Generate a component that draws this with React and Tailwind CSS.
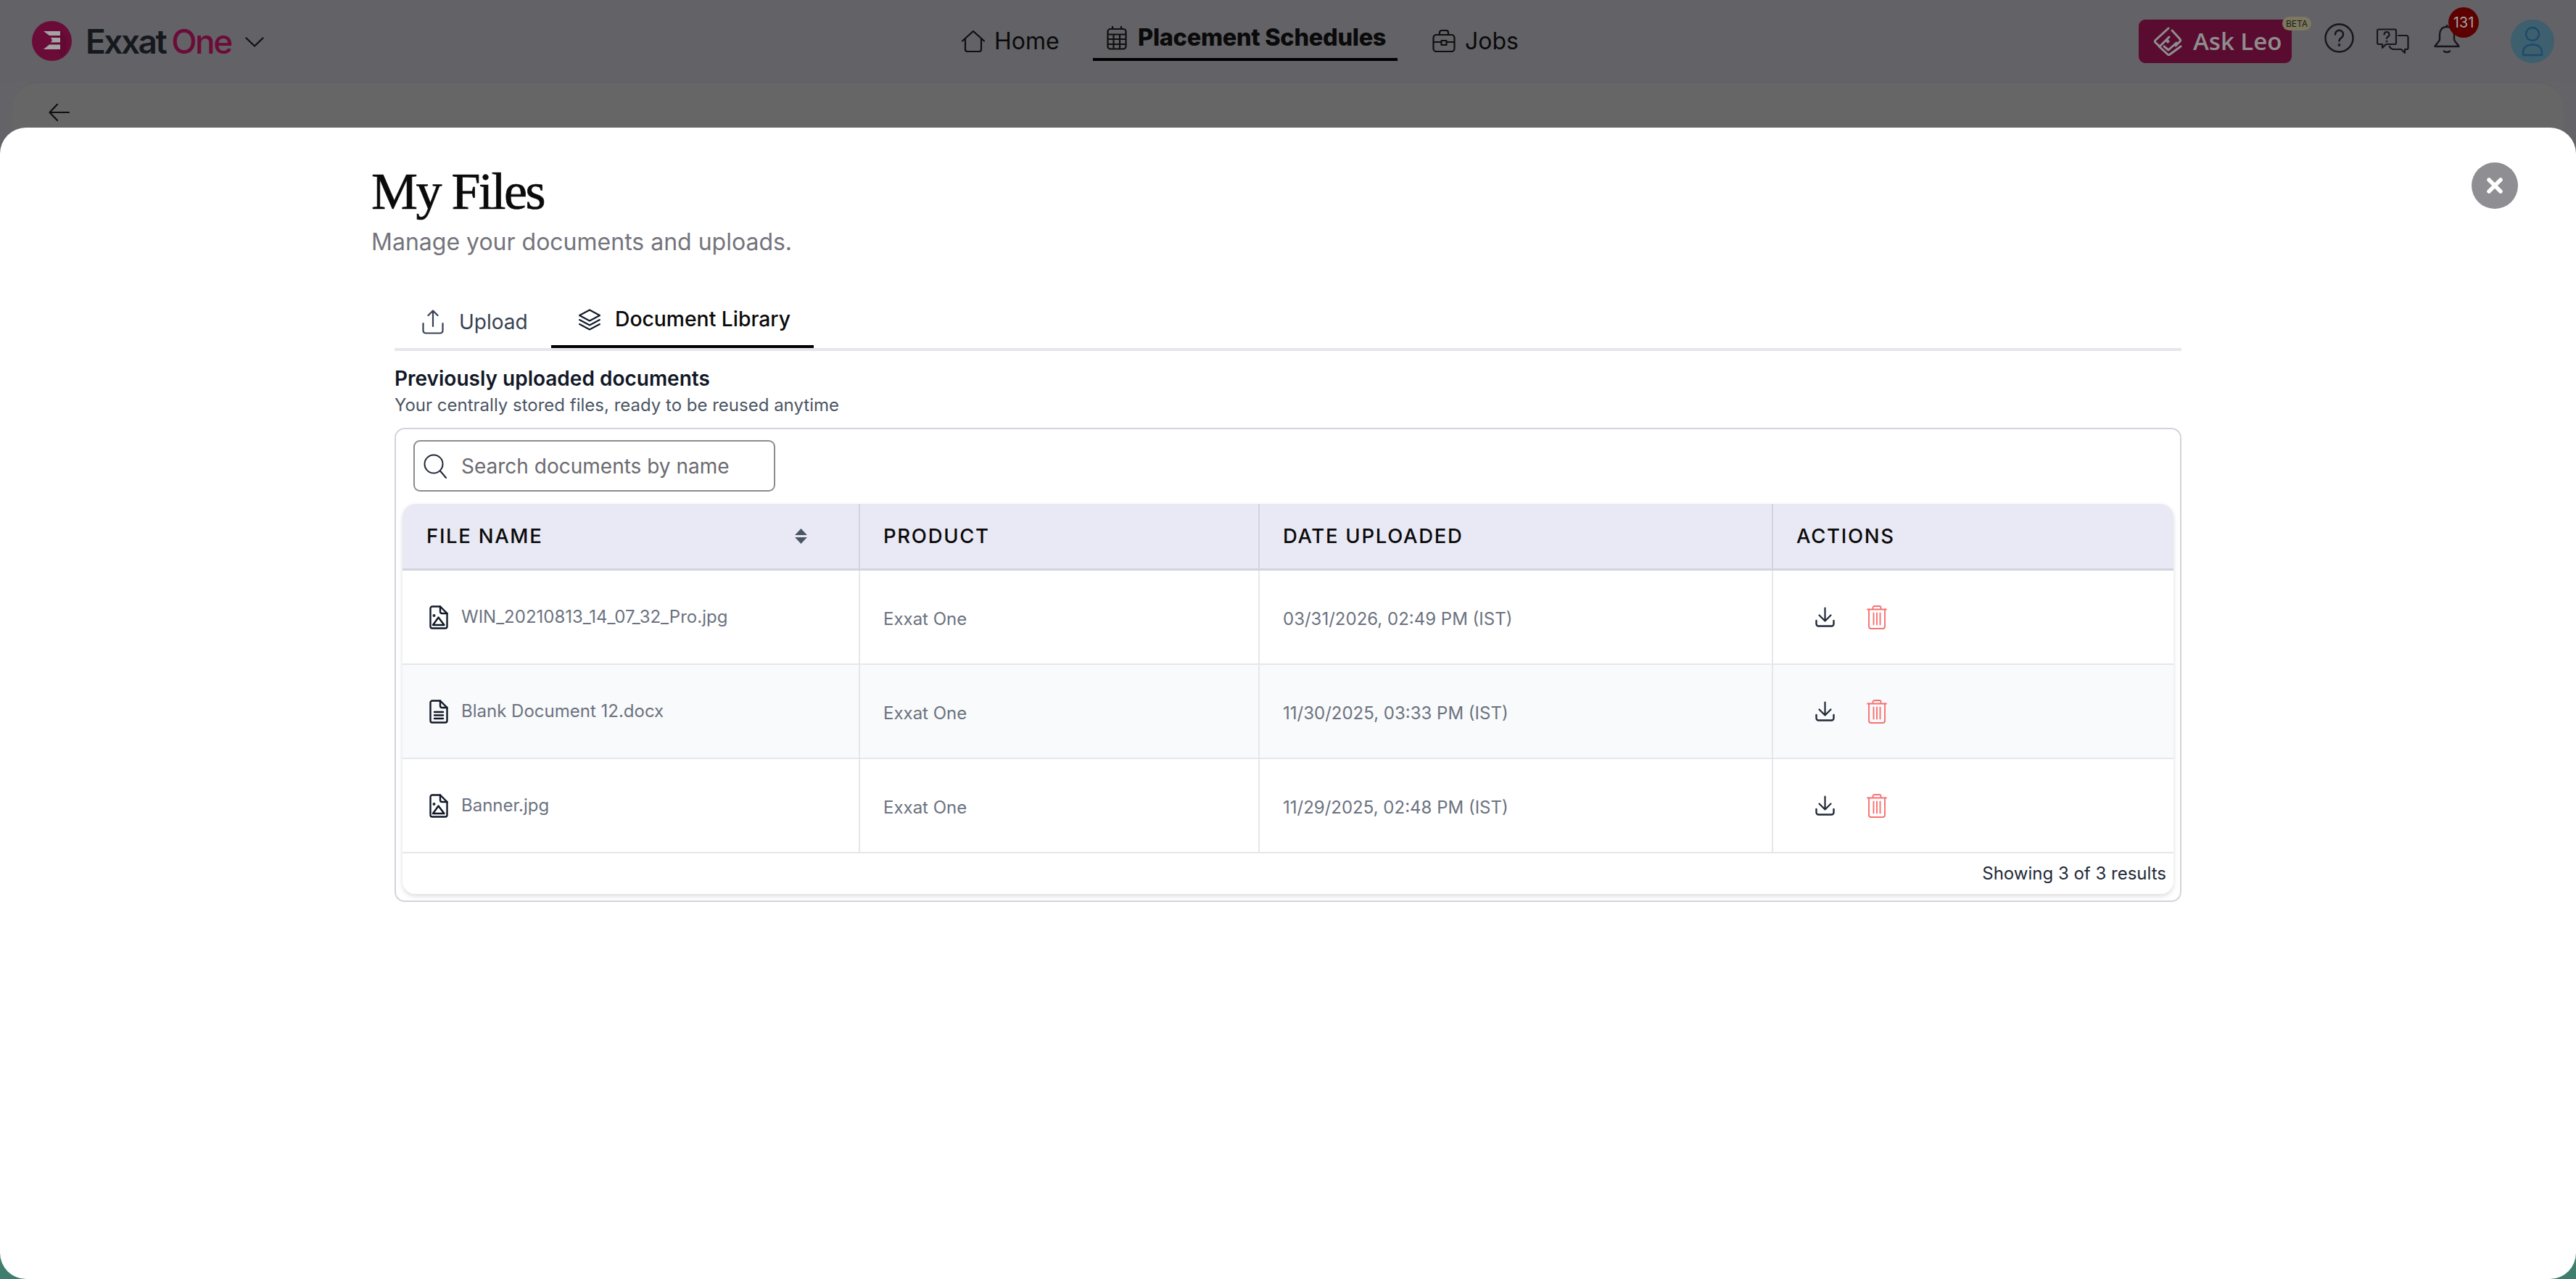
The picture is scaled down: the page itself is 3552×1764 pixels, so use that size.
import React from "react";

const rows = [
  { name: "WIN_20210813_14_07_32_Pro.jpg", date: "03/31/2026, 02:49 PM (IST)", kind: "image" },
  { name: "Blank Document 12.docx", date: "11/30/2025, 03:33 PM (IST)", kind: "doc" },
  { name: "Banner.jpg", date: "11/29/2025, 02:48 PM (IST)", kind: "image" },
];

const FileIcon = ({ kind }) => (
  <svg width="26" height="33" viewBox="0 0 26 33" fill="none" stroke="#111827" strokeWidth="2.4" strokeLinejoin="round" strokeLinecap="round">
    <path d="M4 1.5H15L24.5 11V29a2.5 2.5 0 0 1-2.5 2.5H4A2.5 2.5 0 0 1 1.5 29V4A2.5 2.5 0 0 1 4 1.5Z" />
    <path d="M15 1.5V8.5a2.5 2.5 0 0 0 2.5 2.5H24.5" />
    {kind === "image" ? (
      <>
        <path d="M5 27L12.5 16.5L20.5 27Z" />
        <circle cx="6.5" cy="14" r="0.8" />
      </>
    ) : (
      <path d="M7 17H19M7 21.5H19M7 26H19" />
    )}
  </svg>
);

const DownloadIcon = () => (
  <svg width="27" height="28" viewBox="0 0 27 28" fill="none" stroke="#1f2937" strokeWidth="2.2" strokeLinecap="round" strokeLinejoin="round">
    <path d="M13.5 1.5V19M5.5 11.5L13.5 19.5L21.5 11.5" />
    <path d="M1.5 19V23.5a3 3 0 0 0 3 3H22.5a3 3 0 0 0 3-3V19" strokeWidth="2.4" />
  </svg>
);

const TrashIcon = () => (
  <svg width="28" height="33" viewBox="0 0 28 33" fill="none" stroke="#f87171" strokeWidth="1.9" strokeLinecap="round" strokeLinejoin="round">
    <path d="M1 5.5H27M8.5 5.5V3a2 2 0 0 1 2-2H17.5a2 2 0 0 1 2 2V5.5" />
    <path d="M3 5.5V29a3 3 0 0 0 3 3H22a3 3 0 0 0 3-3V5.5" />
    <path d="M9.5 10.5V26.5M14 10.5V26.5M18.5 10.5V26.5" />
  </svg>
);

const TopBar = () => (
  <div className="h-[113px] flex items-center bg-[#636267]">
    <div className="w-[1326px] pl-[44px] flex items-center shrink-0">
      <svg width="55" height="55" viewBox="0 0 55 55">
        <circle cx="27.5" cy="27.5" r="27.5" fill="#6b0c38" />
        <path d="M27.5 27.5L40 14A27.5 27.5 0 0 1 42 51Z" fill="#5c0a31" opacity="0.6" />
        <path d="M16 14H39V20H24ZM26 23H39V29.500H26L28 26.500ZM24 32.500H39V39H16Z" fill="#a3a3a3" />
      </svg>
      <span className="ml-[19px] text-[46px] leading-none font-semibold tracking-[-2.500px] text-[#15191e] [font-family:Inter,sans-serif]">Exxat</span>
      <span className="ml-[8px] text-[46px] leading-none font-medium tracking-[-2.500px] text-[#6b0c38] [font-family:Inter,sans-serif]">One</span>
      <svg className="ml-[19px] mt-[3px]" width="26" height="14" viewBox="0 0 26 14" fill="none" stroke="#0f0f10" strokeWidth="2.2" strokeLinecap="round" strokeLinejoin="round">
        <path d="M1.500 1.500L13 12.500L24.500 1.500" />
      </svg>
    </div>

    <nav className="flex items-center h-full text-[#0a0a0a] text-[32px] [font-family:Inter,sans-serif]">
      <svg width="32" height="30" viewBox="0 0 32 30" fill="none" stroke="#0f0f10" strokeWidth="2.2" strokeLinejoin="round" strokeLinecap="round">
        <path d="M1 14.500L16 1L31 14.500M5 11V26a3 3 0 0 0 3 3H24a3 3 0 0 0 3-3V11" />
      </svg>
      <span className="ml-[13px] w-[136px]">Home</span>
      <div className="relative h-full flex items-center w-[420px] pl-[19px] pb-[9px]">
        <svg width="28" height="34" viewBox="0 0 28 34" fill="none" stroke="#0f0f10" strokeWidth="2.2" strokeLinejoin="round">
          <path d="M8 1V6M20 1V6" />
          <rect x="1.500" y="5" width="25" height="27.500" rx="3.500" />
          <path d="M1.500 12.500H26.500M1.500 19H26.500M1.500 26H26.500M9.500 12.500V32.500M18 12.500V32.500" />
        </svg>
        <span className="ml-[15px] font-extrabold text-[32.500px] whitespace-nowrap tracking-[-0.300px]">Placement Schedules</span>
        <div className="absolute left-0 right-0 top-[80px] h-[4px] bg-black" />
      </div>
      <svg className="ml-[48px]" width="32" height="31" viewBox="0 0 32 31" fill="none" stroke="#0f0f10" strokeWidth="2.2" strokeLinejoin="round">
        <rect x="1.500" y="7" width="29" height="23" rx="4" />
        <path d="M10 7V4a3 3 0 0 1 3-3H19a3 3 0 0 1 3 3V7M1.500 17H12.500M19.500 17H30.500" />
        <path d="M12.500 15H19.500V21H12.500Z" />
      </svg>
      <span className="ml-[13px]">Jobs</span>
    </nav>

    <div className="ml-auto flex items-center pr-[30px] [font-family:Inter,sans-serif]">
      <div className="relative w-[211px] h-[60px] rounded-[9px] bg-[#5a0b30] flex items-center pl-[20px]">
        <svg width="40" height="40" viewBox="0 0 40 40" fill="none" stroke="#8f8f8f" strokeWidth="3" strokeLinecap="round" strokeLinejoin="round">
          <path d="M21 2L3 18.500a2 2 0 0 0 0 3L9 27L22 14" />
          <path d="M26 5L37 17a2 2 0 0 1 0 3L31 26" />
          <path d="M38 27L23 38a2 2 0 0 1-3 0L8 27" transform="translate(0 0)" />
          <path d="M15 27L21 32L32 22" />
          <path d="M20 17.500L22.500 20L20 22.500L17.500 20Z" fill="#8f8f8f" strokeWidth="1" />
        </svg>
        <span className="ml-[15px] text-[33px] font-semibold text-[#8e8e8e] [font-family:'Open_Sans',sans-serif]">Ask Leo</span>
        <span className="absolute left-[198px] top-[-4px] w-[40px] h-[19px] rounded-full bg-[#7d7860] text-[#1a1a14] text-[12px] leading-[19px] text-center">BETA</span>
      </div>
      <svg className="ml-[45px] mt-[-8px]" width="41" height="41" viewBox="0 0 41 41" fill="none" stroke="#15171c" strokeWidth="2.400" strokeLinecap="round">
        <circle cx="20.500" cy="20.500" r="19" />
        <path d="M15 15.500a5.500 5.500 0 1 1 8.500 4.500c-2 1.300-3 2.300-3 4.500" />
        <circle cx="20.500" cy="30" r="0.700" />
      </svg>
      <svg className="ml-[31px] mt-[1px]" width="45" height="36" viewBox="0 0 45 36" fill="none" stroke="#15171c" strokeWidth="2.200" strokeLinejoin="round" strokeLinecap="round">
        <path d="M3 1.500H25a2 2 0 0 1 2 2V20a2 2 0 0 1-2 2H13L8 27V22H3a2 2 0 0 1-2-2V3.500a2 2 0 0 1 2-2Z" />
        <path d="M30 10H41a2.500 2.500 0 0 1 2.500 2.500V27a2 2 0 0 1-2 2H39V34L34 29H23a6 6 0 0 1-5-4" />
        <path d="M10.500 8.500a3.500 3.500 0 1 1 5 3.200c-1 .6-1.500 1.100-1.500 2.300" />
        <circle cx="14" cy="18" r="0.500" />
      </svg>
      <div className="relative ml-[34px] w-[36px] h-[40px] mt-[-6px]">
        <svg width="36" height="40" viewBox="0 0 36 40" fill="none" stroke="#15171c" strokeWidth="2.400" strokeLinejoin="round" strokeLinecap="round">
          <path d="M18 1V3M18 3C11 3 8 8 8 14V20C8 24 3 26 1.500 30H34.500C33 26 28 24 28 20V14C28 8 25 3 18 3Z" />
          <path d="M14 36.500C15.500 38.500 20.500 38.500 22 36.500" />
        </svg>
        <span className="absolute left-[20px] top-[-24px] w-[42px] h-[42px] rounded-full bg-[#5c0000] text-[#a3a3a3] text-[20px] leading-[42px] text-center">131</span>
      </div>
      <div className="ml-[35px] w-px h-[38px] bg-[#6e5f65]" />
      <div className="ml-[34px] w-[60px] h-[60px] rounded-full bg-[#3e5f6e] flex items-center justify-center">
        <svg width="30" height="42" viewBox="0 0 30 42" fill="none" stroke="#1d4a6b" strokeWidth="2.400" strokeLinejoin="round">
          <circle cx="15" cy="11" r="9" />
          <path d="M2 40V36C2 29 8 25.500 15 25.500S28 29 28 36V40Z" />
        </svg>
      </div>
    </div>
  </div>
);

const DocsTable = () => (
  <div className="mx-[9px] mt-[17px] rounded-[18px] shadow-[0_3px_6px_rgba(0,0,0,0.14)] overflow-hidden text-[#6b7280]">
    <div className="grid grid-cols-[631px_551px_708px_1fr] h-[92px] bg-[#e9e9f5] border-b-[3px] border-[#d1d5db] text-[27.500px] font-medium tracking-[1.700px] text-[#0a0a0a]">
      <div className="border-r-2 border-[#d1d5db] pl-[33px] pr-[71px] flex items-center justify-between">
        <span>FILE NAME</span>
        <svg width="17" height="21" viewBox="0 0 16 20" fill="#4b5563">
          <path d="M8 0L16 8.500H0ZM8 20L0 11.500H16Z" />
        </svg>
      </div>
      <div className="border-r-2 border-[#d1d5db] pl-[32px] flex items-center">PRODUCT</div>
      <div className="border-r-2 border-[#d1d5db] pl-[32px] flex items-center">DATE UPLOADED</div>
      <div className="pl-[32px] flex items-center">ACTIONS</div>
    </div>

    {rows.map((row, i) => (
      <div key={row.name} className={`grid grid-cols-[631px_551px_708px_1fr] h-[130px] border-b-2 border-[#e5e7eb] text-[24px] ${i === 1 ? "bg-[#f9fafb]" : "bg-white"}`}>
        <div className="border-r-2 border-[#e5e7eb] pl-[37px] flex items-center">
          <FileIcon kind={row.kind} />
          <span className="ml-[18px]">{row.name}</span>
        </div>
        <div className="border-r-2 border-[#e5e7eb] pl-[32px] pt-[5px] flex items-center">Exxat One</div>
        <div className="border-r-2 border-[#e5e7eb] pl-[32px] pt-[5px] flex items-center">{row.date}</div>
        <div className="pl-[58px] flex items-center">
          <DownloadIcon />
          <span className="ml-[44px] flex">
            <TrashIcon />
          </span>
        </div>
      </div>
    ))}

    <div className="h-[56px] bg-white flex items-center justify-end pr-[10px] text-[24px] text-[#1f2937]">
      Showing 3 of 3 results
    </div>
  </div>
);

const FilesModal = () => (
  <div className="absolute inset-x-0 top-[176px] bottom-0 bg-white rounded-[36px] pl-[512px] [font-family:Inter,sans-serif]">
    <button className="absolute top-[48px] right-[80px] w-[64px] h-[64px] rounded-full bg-[#8e8e93] flex items-center justify-center">
      <svg width="24" height="24" viewBox="0 0 24 24" fill="none" stroke="#ffffff" strokeWidth="5.500" strokeLinecap="round">
        <path d="M4 4L20 20M20 4L4 20" />
      </svg>
    </button>

    <h1 className="pt-[48px] text-[72px] leading-[80px] tracking-[-2.500px] text-[#0a0a0a] [font-family:'Liberation_Serif',serif] [-webkit-text-stroke:0.7px_#0a0a0a]">My Files</h1>
    <p className="mt-[10px] text-[32px] leading-[40px] text-[#74747c]">Manage your documents and uploads.</p>

    <div className="ml-[32px] w-[2464px] mt-[48px]">
      <div className="flex h-[82px] border-b-4 border-[#e5e7eb]">
        <div className="w-[216px] pl-[38px] pt-[6px] flex items-center text-[28px] text-[#374151]">
          <svg width="30" height="34" viewBox="0 0 30 34" fill="none" stroke="#374151" strokeWidth="2.200" strokeLinecap="round" strokeLinejoin="round">
            <path d="M15 23V1.500M8.500 8L15 1.500L21.500 8" />
            <path d="M1.500 19V29a3.500 3.500 0 0 0 3.500 3.500H25a3.500 3.500 0 0 0 3.500-3.500V19" />
          </svg>
          <span className="ml-[21px]">Upload</span>
        </div>
        <div className="w-[362px] pl-[37px] pt-[3px] h-[78px] border-b-4 border-black flex items-center text-[28.300px] font-medium text-[#0a0a0a]">
          <svg width="32" height="30" viewBox="0 0 32 30" fill="none" stroke="#111827" strokeWidth="2" strokeLinecap="round" strokeLinejoin="round">
            <path d="M16 1.500L30 9L16 16.500L2 9Z" />
            <path d="M2 15L16 22.500L30 15M2 21L16 28.500L30 21" />
          </svg>
          <span className="ml-[19px]">Document Library</span>
        </div>
      </div>

      <h2 className="mt-[20px] text-[28px] leading-[36px] font-semibold text-[#111827]">Previously uploaded documents</h2>
      <p className="mt-[1px] text-[24px] leading-[36px] text-[#4b5563]">Your centrally stored files, ready to be reused anytime</p>

      <div className="mt-[13px] border-2 border-[#d1d5db] rounded-[14px] pt-[15px] pb-[9px]">
        <div className="ml-[24px] w-[499px] h-[71px] border-2 border-[#8c8c8c] rounded-[9px] flex items-center pl-[12px] text-[28px] text-[#6b6b70]">
          <svg width="32" height="34" viewBox="0 0 32 34" fill="none" stroke="#1f2937" strokeWidth="2" strokeLinecap="round">
            <circle cx="14" cy="14" r="12.500" />
            <path d="M23 23.500L31 33" />
          </svg>
          <span className="ml-[20px]">Search documents by name</span>
        </div>
        <DocsTable />
      </div>
    </div>
  </div>
);

export default function App() {
  return (
    <div className="relative w-[3552px] h-[1764px] overflow-hidden bg-[#646368]">
      <TopBar />
      <div className="mx-[17px] h-[1651px] rounded-t-[36px] bg-[#666666] pl-[50px] pt-[29px] border-t border-[#5f5f62]">
        <svg width="29" height="24" viewBox="0 0 29 24" fill="none" stroke="#0f0f10" strokeWidth="2.200" strokeLinecap="round" strokeLinejoin="round">
          <path d="M28 12H1.500M12 1L1.500 12L12 23" />
        </svg>
      </div>
      <div className="absolute inset-0 bg-[linear-gradient(to_bottom,transparent_94%,#3f7d6c_97%)]" />
      <FilesModal />
    </div>
  );
}
